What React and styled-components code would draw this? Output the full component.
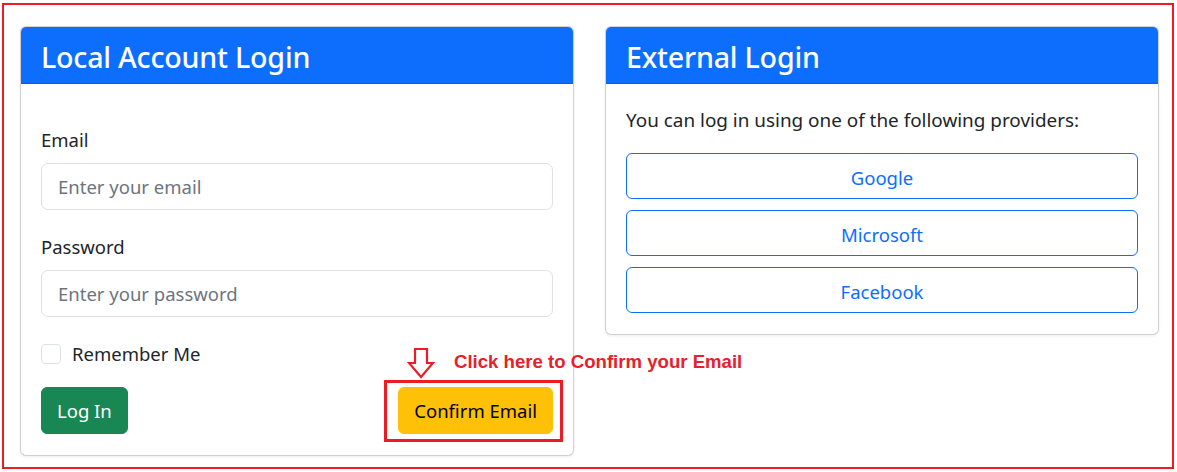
import React from 'react'
import styled, { createGlobalStyle } from 'styled-components'

const GlobalStyle = createGlobalStyle`
    * {
        box-sizing: border-box;
    }
    body {
        margin: 0;
        background: #ffffff;
        font-family: "Noto Sans", "Open Sans", sans-serif;
        color: #212529;
    }
`

const Frame = styled.div`
    margin: 3px 3px 0 2px;
    height: 466px;
    border: 2px solid #ed1c24;
    padding: 21px 13px 0 16px;
    display: flex;
    align-items: flex-start;
    gap: 31px;
`

const Card = styled.div`
    width: 554px;
    background: #ffffff;
    border: 1px solid rgba(0, 0, 0, 0.18);
    border-radius: 6px;
    box-shadow: 0 1px 3px rgba(0, 0, 0, 0.08);
`

const CardHeader = styled.div`
    height: 57px;
    background: #0d6efd;
    border-bottom: 1px solid #0b5ed7;
    border-radius: 5px 5px 0 0;
    padding: 0 20px;
    display: flex;
    align-items: center;
`

const Title = styled.h2`
    margin: 2px 0 0;
    color: #ffffff;
    font-size: 28.6px;
    font-weight: 500;
    letter-spacing: -0.2px;
`

const CardBody = styled.div`
    padding: ${p => p.$top}px 20px 21px;
`

const Field = styled.div`
    margin-bottom: 23px;
`

const Label = styled.label`
    display: block;
    font-size: 18.5px;
    line-height: 27px;
    margin-bottom: 10px;
`

const Input = styled.input`
    display: block;
    width: 100%;
    height: 47px;
    padding: 0 16px;
    font-family: inherit;
    font-size: 18.5px;
    color: #212529;
    border: 1px solid #dee2e6;
    border-radius: 7px;
    outline: none;
    &::placeholder {
        color: #6c757d;
    }
`

const CheckRow = styled.label`
    display: flex;
    align-items: center;
    gap: 11px;
    font-size: 18.5px;
    line-height: 27px;
    margin-bottom: 20px;
`

const CheckBox = styled.span`
    width: 20px;
    height: 20px;
    border: 1px solid #dee2e6;
    border-radius: 4px;
    background: #ffffff;
`

const Actions = styled.div`
    position: relative;
    display: flex;
    justify-content: space-between;
    align-items: center;
`

const Button = styled.button`
    height: 47px;
    padding: 0 15px;
    font-family: inherit;
    font-size: 18.5px;
    border-radius: 6px;
    border: 1px solid ${p => p.$bg};
    background: ${p => p.$bg};
    color: ${p => p.$fg};
    cursor: pointer;
`

const Highlight = styled.div`
    position: absolute;
    right: -10px;
    top: -7px;
    width: 179px;
    height: 62px;
    border: 3px solid #ed1c24;
    pointer-events: none;
`

const Arrow = styled.svg`
    position: absolute;
    left: 366px;
    top: -39px;
`

const Hint = styled.span`
    position: absolute;
    left: 413px;
    top: -36px;
    white-space: nowrap;
    font-family: "Liberation Sans", Arial, sans-serif;
    font-weight: 700;
    font-size: 18.6px;
    color: #e8202a;
`

const Lead = styled.p`
    margin: 0 0 19px;
    font-size: 18.9px;
    line-height: 27px;
`

const ProviderList = styled.div`
    display: flex;
    flex-direction: column;
    gap: 11px;
`

const ProviderButton = styled.button`
    height: 46px;
    width: 100%;
    padding-top: 3px;
    font-family: inherit;
    font-size: 18.5px;
    color: #0d6efd;
    background: #ffffff;
    border: 1px solid #0d6efd;
    border-radius: 6px;
    cursor: pointer;
`

const providers = ['Google', 'Microsoft', 'Facebook']

export default function App() {
    return (
        <>
            <GlobalStyle />
            <Frame>
                <Card>
                    <CardHeader>
                        <Title>Local Account Login</Title>
                    </CardHeader>
                    <CardBody $top={42}>
                        <Field>
                            <Label>Email</Label>
                            <Input placeholder="Enter your email" />
                        </Field>
                        <Field>
                            <Label>Password</Label>
                            <Input type="password" placeholder="Enter your password" />
                        </Field>
                        <CheckRow>
                            <CheckBox />
                            Remember Me
                        </CheckRow>
                        <Actions>
                            <Button $bg="#198754" $fg="#ffffff">Log In</Button>
                            <Button $bg="#ffc107" $fg="#000000">Confirm Email</Button>
                            <Highlight />
                            <Arrow width="28" height="31" viewBox="0 0 28 31">
                                <path d="M8 1 H20 V15 H26 L14 29 L2 15 H8 Z" fill="none" stroke="#ed1c24" strokeWidth="2.2" strokeLinejoin="miter" />
                            </Arrow>
                            <Hint>Click here to Confirm your Email</Hint>
                        </Actions>
                    </CardBody>
                </Card>
                <Card>
                    <CardHeader>
                        <Title>External Login</Title>
                    </CardHeader>
                    <CardBody $top={23}>
                        <Lead>You can log in using one of the following providers:</Lead>
                        <ProviderList>
                            {providers.map(name => (
                                <ProviderButton key={name}>{name}</ProviderButton>
                            ))}
                        </ProviderList>
                    </CardBody>
                </Card>
            </Frame>
        </>
    )
}
